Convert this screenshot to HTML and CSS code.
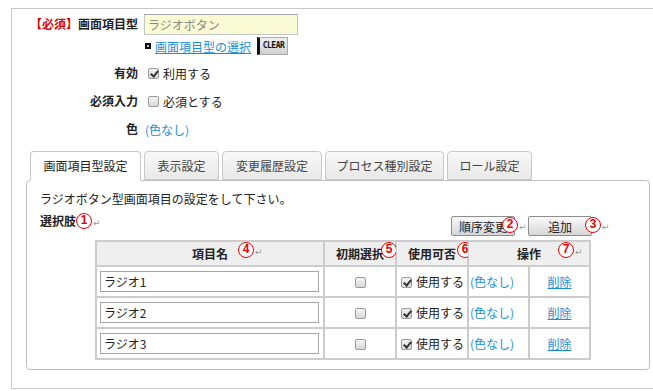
FILE: index.html
```html
<!DOCTYPE html>
<html lang="ja">
<head>
    <meta charset="UTF-8">
    <title>画面項目設定</title>
    <link rel="stylesheet" href="styles.css">
</head>
<body>
    <div class="frame">
        <div class="fields">
            <div class="field-label first"><span class="req">【必須】</span>画面項目型</div>
            <div class="field-value first">
                <input class="type-input" type="text" value="ラジオボタン" readonly>
                <div class="type-select">
                    <span class="bullet"></span>
                    <a href="#" class="link">画面項目型の選択</a>
                    <span class="clear-btn">CLEAR</span>
                </div>
            </div>

            <div class="field-label">有効</div>
            <div class="field-value"><span class="cb on"></span>利用する</div>

            <div class="field-label">必須入力</div>
            <div class="field-value"><span class="cb"></span>必須とする</div>

            <div class="field-label">色</div>
            <div class="field-value"><span class="color-text">(色なし)</span></div>
        </div>

        <div class="tab-area">
            <ul class="tabs">
                <li class="tab active" style="width:111px">画面項目型設定</li>
                <li class="tab" style="width:75px">表示設定</li>
                <li class="tab" style="width:100px">変更履歴設定</li>
                <li class="tab" style="width:119px">プロセス種別設定</li>
                <li class="tab" style="width:85px">ロール設定</li>
            </ul>

            <div class="panel">
                <p class="desc">ラジオボタン型画面項目の設定をして下さい。</p>

                <div class="toolbar">
                    <div class="toolbar-title">選択肢<span class="note inline"><span class="circle">1</span><span class="ret">↵</span></span></div>
                    <div class="toolbar-buttons">
                        <div class="btn-wrap">
                            <button class="btn">順序変更</button>
                            <span class="note note-2"><span class="circle">2</span><span class="ret">↵</span></span>
                        </div>
                        <div class="btn-wrap">
                            <button class="btn">追加</button>
                            <span class="note note-3"><span class="circle">3</span><span class="ret">↵</span></span>
                        </div>
                    </div>
                </div>

                <table class="choices">
                    <thead>
                        <tr>
                            <th class="col-name">項目名<span class="note note-4"><span class="circle">4</span><span class="ret">↵</span></span></th>
                            <th class="col-init">初期選択<span class="note note-5"><span class="circle">5</span><span class="ret">↵</span></span></th>
                            <th class="col-use">使用可否<span class="note note-6"><span class="circle">6</span><span class="ret">↵</span></span></th>
                            <th colspan="2">操作<span class="note note-7"><span class="circle">7</span><span class="ret">↵</span></span></th>
                        </tr>
                    </thead>
                    <tbody>
                        <tr>
                            <td><input class="name-input" type="text" value="ラジオ1"></td>
                            <td class="center"><span class="cb"></span></td>
                            <td><span class="cb on"></span>使用する</td>
                            <td class="col-color"><span class="color-text">(色なし)</span></td>
                            <td class="center"><a href="#" class="link">削除</a></td>
                        </tr>
                        <tr>
                            <td><input class="name-input" type="text" value="ラジオ2"></td>
                            <td class="center"><span class="cb"></span></td>
                            <td><span class="cb on"></span>使用する</td>
                            <td class="col-color"><span class="color-text">(色なし)</span></td>
                            <td class="center"><a href="#" class="link">削除</a></td>
                        </tr>
                        <tr>
                            <td><input class="name-input" type="text" value="ラジオ3"></td>
                            <td class="center"><span class="cb"></span></td>
                            <td><span class="cb on"></span>使用する</td>
                            <td class="col-color"><span class="color-text">(色なし)</span></td>
                            <td class="center"><a href="#" class="link">削除</a></td>
                        </tr>
                    </tbody>
                </table>
            </div>
        </div>
    </div>
</body>
</html>
```

FILE: styles.css
```css
body {
    margin: 0;
    font-family: "Noto Sans CJK JP", "Liberation Sans", sans-serif;
    font-size: 12px;
    color: #222;
    background: #fff;
    overflow: hidden;
}
.frame {
    margin: 8px 0 0 11px;
    width: 650px;
    height: 379px;
    border: 1px solid #c8c8c8;
    border-right: none;
}
.fields {
    display: grid;
    grid-template-columns: 126px 1fr;
    column-gap: 6px;
    padding-top: 5px;
}
.field-label {
    text-align: right;
    font-weight: bold;
    height: 28px;
    line-height: 28px;
}
.field-label.first {
    height: 45px;
    line-height: 20px;
}
.field-value {
    height: 28px;
    display: flex;
    align-items: center;
}
.field-value.first {
    height: 45px;
    display: block;
}
.req {
    color: #e00000;
}
.type-input {
    box-sizing: border-box;
    width: 154px;
    height: 21px;
    margin: 0;
    padding: 0 3px;
    border: 1px solid #c4c4c4;
    border-top-color: #a8a8a8;
    background: #fafad4;
    color: #888;
    font: 12px "Noto Sans CJK JP", sans-serif;
    display: block;
}
.type-select {
    display: flex;
    align-items: center;
    height: 18px;
    margin-top: 2px;
}
.bullet {
    position: relative;
    width: 6px;
    height: 6px;
    background: #111;
    margin: 0 4px 0 1px;
}
.bullet::after {
    content: "";
    position: absolute;
    left: 2px;
    top: 2px;
    width: 2px;
    height: 2px;
    background: #bbb;
}
.link {
    color: #1a8fd8;
    text-decoration: underline;
}
.clear-btn {
    margin-left: 6px;
    width: 27px;
    height: 16px;
    background: linear-gradient(#f0f0f0, #d0d0d0);
    border: 1px solid #aaa;
    border-left: 3px solid #111;
    font: bold 8px "DejaVu Sans Mono", monospace;
    line-height: 16px;
    letter-spacing: -0.5px;
    text-align: center;
    color: #111;
}
.cb {
    display: inline-block;
    box-sizing: border-box;
    width: 11px;
    height: 11px;
    border: 1px solid #9a9a9a;
    border-radius: 2px;
    background: linear-gradient(#f4f4f4, #d8d8d8);
    margin: 0 4px 0 4px;
    vertical-align: -1px;
    position: relative;
}
.cb.on::after {
    content: "";
    position: absolute;
    left: 3px;
    top: 0;
    width: 3px;
    height: 6px;
    border: solid #333;
    border-width: 0 2px 2px 0;
    transform: rotate(40deg);
}
.color-text {
    color: #1a8fd8;
    margin-left: 1px;
}
.tab-area {
    margin: 8px 0 0 14px;
    width: 624px;
}
.tabs {
    list-style: none;
    margin: 0 0 -1px 4px;
    padding: 0;
    display: flex;
    gap: 3px;
    position: relative;
    z-index: 1;
}
.tab {
    box-sizing: border-box;
    height: 29px;
    line-height: 28px;
    text-align: center;
    color: #444;
    border: 1px solid #c8c8c8;
    border-radius: 4px 4px 0 0;
    background: linear-gradient(#f9f9f9, #e8e8e8);
}
.tab.active {
    background: #fff;
    border-bottom-color: #fff;
    height: 30px;
    color: #222;
}
.panel {
    box-sizing: border-box;
    width: 624px;
    height: 190px;
    border: 1px solid #c0c0c0;
    border-radius: 4px;
    padding: 0 13px;
}
.desc {
    margin: 10px 0 0;
    line-height: 16px;
}
.toolbar {
    display: flex;
    justify-content: space-between;
    align-items: flex-start;
    width: 552px;
    margin-top: 6px;
    height: 22px;
}
.toolbar-title {
    font-weight: bold;
    line-height: 16px;
}
.toolbar-buttons {
    display: flex;
    gap: 13px;
    margin-top: 3px;
}
.btn-wrap {
    position: relative;
}
.btn {
    display: block;
    width: 64px;
    height: 20px;
    padding: 0;
    border: 1px solid #8e8e8e;
    border-radius: 2px;
    background: linear-gradient(#fafafa, #d6d6d6);
    font: 12px "Noto Sans CJK JP", sans-serif;
    color: #222;
}
.note {
    display: inline-flex;
    align-items: center;
    position: absolute;
    white-space: nowrap;
    font-weight: bold;
}
.note.inline {
    position: static;
    vertical-align: top;
}
.circle {
    box-sizing: border-box;
    width: 16px;
    height: 16px;
    border: 1.5px solid #ee0000;
    border-radius: 50%;
    background: #fff;
    color: #ee0000;
    font: bold 12px/13px "Liberation Sans", sans-serif;
    text-align: center;
}
.ret {
    color: #999;
    font: 9px "DejaVu Sans", sans-serif;
    margin-left: 1px;
    margin-top: 3px;
}
.note-2 {
    left: 51px;
    top: 1px;
}
.note-3 {
    left: 57px;
    top: 1px;
}
.choices {
    margin: 5px 0 0 55px;
    width: 496px;
    border: 1px solid #cccccc;
    border-spacing: 0;
    table-layout: fixed;
}
.choices th,
.choices td {
    border: 1px solid #cccccc;
    padding: 0;
}
.choices th {
    position: relative;
    height: 23px;
    background: #efefef;
    font-weight: bold;
    text-align: center;
}
.choices td {
    height: 29px;
    white-space: nowrap;
}
.col-name { width: 226px; }
.col-init { width: 70px; }
.col-use { width: 70px; }
.col-color { width: 49px; }
.center {
    text-align: center;
}
.name-input {
    box-sizing: border-box;
    width: 219px;
    height: 21px;
    margin: 0 0 0 3px;
    padding: 0 3px;
    border: 1px solid #a5a5a5;
    font: 12px "Noto Sans CJK JP", sans-serif;
    color: #222;
    display: block;
}
.note-4 { left: 141px; top: 0; }
.note-5 { left: 56px; top: 0; }
.note-6 { left: 60px; top: 0; }
.note-7 { left: 89px; top: 0; }
```
